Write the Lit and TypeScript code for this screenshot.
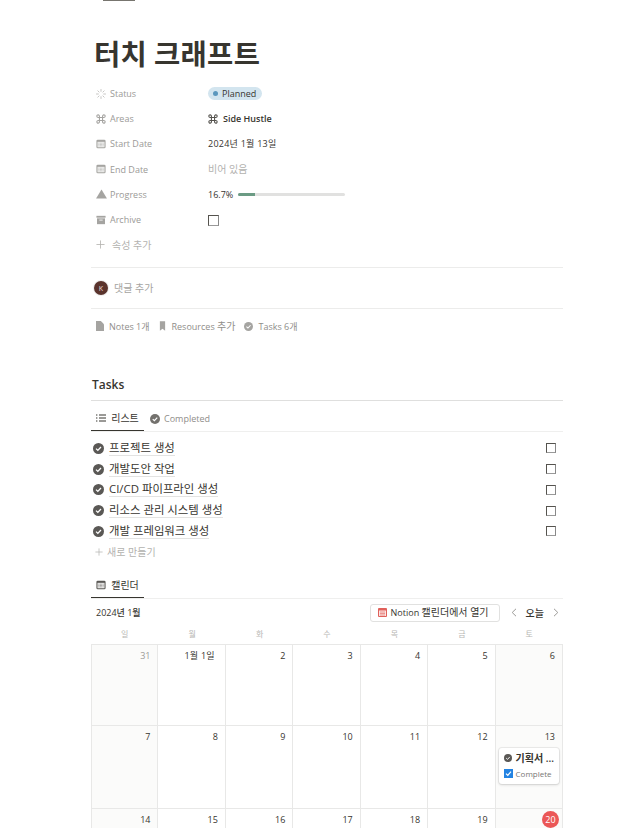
import { LitElement, html, css } from "lit";
import { customElement } from "lit/decorators.js";

const check = (s: number, c = "#5a5855") => html`<svg width=${s} height=${s} viewBox="0 0 16 16"><circle cx="8" cy="8" r="8" fill=${c}/><path d="M4.4 8.2l2.6 2.6 4.6-5" fill="none" stroke="#fff" stroke-width="1.9"/></svg>`;
const cal = (s: number, c = "#a5a4a1") => html`<svg width=${s} height=${s} viewBox="0 0 12 12"><rect x=".5" y=".8" width="11" height="10.4" rx="1.6" fill=${c}/><rect x="1.8" y="3.4" width="8.4" height="6.5" fill="#f1f1f0"/><path d="M3 5h6M3 6.6h6M3 8.2h6" stroke=${c} stroke-width=".8" stroke-dasharray="1 .7"/></svg>`;
const cmd = (s: number, c: string) => html`<svg width=${s} height=${s} viewBox="0 0 14 14" fill="none" stroke=${c} stroke-width="1.5"><path d="M4.8 4.8h4.4v4.4H4.8zM4.8 4.8H3.2a1.8 1.8 0 1 1 1.6-1.6zM9.2 4.8V3.2a1.8 1.8 0 1 1 1.6 1.6zM9.2 9.2h1.6a1.8 1.8 0 1 1-1.6 1.6zM4.8 9.2v1.6a1.8 1.8 0 1 1-1.6-1.6z"/></svg>`;
const spinner = html`<svg width="10" height="10" viewBox="0 0 12 12" stroke="#bcbbb8" stroke-width="1" stroke-linecap="round"><path d="M6 .6v2.2M6 9.2v2.2M.6 6h2.2M9.2 6h2.2M2.2 2.2l1.5 1.5M8.3 8.3l1.5 1.5M2.2 9.8l1.5-1.5M8.3 3.7l1.5-1.5"/></svg>`;
const plus = (s: number) => html`<svg width=${s} height=${s} viewBox="0 0 10 10" stroke="#b3b2af" stroke-width=".9"><path d="M5 .5v9M.5 5h9"/></svg>`;

const props = [
  ["Status", spinner],
  ["Areas", cmd(10, "#a5a4a1")],
  ["Start Date", cal(10)],
  ["End Date", cal(10)],
  ["Progress", html`<svg class="tri" width="11" height="10" viewBox="0 0 12 11"><path d="M6 .5L12 10.5H0z" fill="#a5a4a1"/></svg>`],
  ["Archive", html`<svg width="10" height="10" viewBox="0 0 12 12"><path d="M.5 1h11v2.2H.5z" fill="#a5a4a1"/><path d="M1.2 4h9.6v7H1.2z" fill="#a5a4a1"/><path d="M4 5.6h4v1H4z" fill="#fff"/></svg>`],
];
const tasks = ["프로젝트 생성", "개발도안 작업", "CI/CD 파이프라인 생성", "리소스 관리 시스템 생성", "개발 프레임워크 생성"];
const days = ["일", "월", "화", "수", "목", "금", "토"];
const weeks = [
  { h: 81, d: ["31", "1월 1일", "2", "3", "4", "5", "6"] },
  { h: 83, d: ["7", "8", "9", "10", "11", "12", "13"] },
  { h: 40, d: ["14", "15", "16", "17", "18", "19", "20"] },
];

@customElement("app-root")
export class AppRoot extends LitElement {
  static styles = css`
    :host { display: block; height: 828px; overflow: hidden; background: #fff; color: #37352f;
      font-family: "Open Sans", "Noto Sans CJK KR", sans-serif; font-size: 9px; }
    .ko { font-size: 10px; line-height: 1; }
    .page { padding: 0 72px 0 91px; display: flex; flex-direction: column; }
    .topicon { width: 32px; height: 1px; background: #77756f; margin-left: 12px; }
    h1 { margin: 34px 0 0 3px; font: 700 28.5px/36px "Noto Sans CJK KR", sans-serif; color: #37352f; letter-spacing: .35px; }
    .props { margin: 10px 0 0 3px; display: flex; flex-direction: column; }
    .prop { height: 25.2px; display: flex; align-items: center; }
    .pname { width: 114px; box-sizing: border-box; padding-left: 2px; display: flex; align-items: center; gap: 4px; color: #9b9a97; }
    .pname svg { flex: none; }
    .tri { margin-left: -.5px; margin-right: -.5px; }
    .pval { display: flex; align-items: center; }
    .pill { display: flex; align-items: center; gap: 4px; height: 13px; padding: 0 6px 0 5px; border-radius: 7px; background: #d3e5ef; color: #37352f; }
    .dot { width: 5px; height: 5px; border-radius: 50%; background: #5b97bd; }
    .area { display: flex; align-items: center; gap: 5px; font-weight: 600; }
    .date { letter-spacing: .25px; }
    .muted { color: #b3b2af; }
    .bar { width: 107px; height: 3px; border-radius: 2px; background: #e1e1e0; margin-left: 5px; overflow: hidden; }
    .fill { height: 100%; width: 17px; background: #6b9b84; }
    .box { width: 8px; height: 8px; border: 1px solid #55534e; background: #fff; box-sizing: content-box; border-bottom-color: #999; border-right-color: #888; }
    .pbox { width: 9px; height: 9px; margin-top: 1px; }
    .add { gap: 7px; color: #b3b2af; padding-left: 2px; }
    hr { width: 100%; border: 0; height: 1px; background: #ececeb; margin: 0; }
    .hr1 { margin-top: 9.8px; }
    .comment { height: 40px; display: flex; align-items: center; gap: 6px; padding-left: 3px; color: #a5a4a1; }
    .avatar { width: 14px; height: 14px; border-radius: 50%; background: #5a332c; color: #e8dfdc; font-size: 7px; display: flex; align-items: center; justify-content: center; box-shadow: 0 0 0 1px #eee; }
    .links { height: 34px; display: flex; align-items: center; gap: 9px; padding-left: 5px; color: #8f8e8a; }
    .link { display: flex; align-items: center; gap: 5px; }
    .link.res { gap: 6px; }
    h2 { margin: 33px 0 0 1px; font: 600 12px/17px "Open Sans", "Noto Sans CJK KR", sans-serif; color: #37352f; }
    .h2line { margin-top: 7px; background: #dfdfde; }
    .tabs { height: 30px; display: flex; align-items: center; gap: 6px; }
    .tab { width: 53px; height: 30px; box-sizing: border-box; padding-top: 5px; border-bottom: 1px solid #37352f; display: flex; align-items: center; justify-content: center; gap: 5px; color: #37352f; }
    .tab.gray { width: auto; border: 0; gap: 4px; color: #8f8e8a; font-weight: 500; }
    .thin { background: #efefee; }
    .rows { margin-top: 6px; display: flex; flex-direction: column; }
    .task { height: 20.7px; display: flex; align-items: center; gap: 5px; padding-left: 2px; }
    .tname { font-size: 11.4px; line-height: 14px; border-bottom: 1px solid #e3e3e2; }
    .task .box { margin-left: auto; margin-right: 7px; }
    .new { height: 20px; display: flex; align-items: center; gap: 4px; padding-left: 4px; color: #b3b2af; }
    .caltab { margin-top: 9px; height: 27px; }
    .caltab .tab { height: 27px; padding-top: 3px; }
    .calhead { height: 28px; display: flex; align-items: center; padding: 0 4px 0 5px; }
    .month { font-weight: 500; }
    .open { margin-left: auto; height: 18px; box-sizing: border-box; width: 130px; border: 1px solid #e1e1e0; border-radius: 3px; display: flex; align-items: center; gap: 4px; padding-left: 7px; color: #37352f; }
    .nav { display: flex; align-items: center; margin-left: 11px; gap: 9px; color: #37352f; }
    .nav .ko { font-weight: 500; }
    .grid { display: grid; grid-template-columns: repeat(7, 1fr); }
    .dow { text-align: center; color: #b8b7b4; height: 17px; line-height: 14px; font-size: 8px; }
    .wk { border-top: 1px solid #e8e8e7; box-sizing: border-box; }
    .cell { border-right: 1px solid #e8e8e7; text-align: right; padding: 4px 7px 0 0; box-sizing: border-box; position: relative; color: #37352f; }
    .cell:first-child { border-left: 1px solid #e8e8e7; }
    .cell.we { background: #fbfbfa; }
    .cell.out { color: #9b9a97; }
    .first { margin-right: 3px; letter-spacing: .25px; }
    .today { display: inline-flex; width: 17px; height: 17px; border-radius: 50%; background: #eb5757; color: #fff; align-items: center; justify-content: center; margin: -3px -4px 0 0; }
    .card { position: absolute; left: 3px; right: 3px; top: 22px; height: 36px; border-radius: 3px; background: #fff; box-shadow: 0 0 0 1px rgba(15,15,15,.06), 0 1px 3px rgba(15,15,15,.14); text-align: left; padding: 3px 5px; box-sizing: border-box; }
    .cline { display: flex; align-items: center; gap: 4px; height: 15px; font-weight: 600; }
    .cc { display: flex; align-items: center; gap: 3px; height: 15px; color: #787774; font-size: 8px; }
    .cb { width: 9px; height: 9px; background: #2383e2; display: flex; align-items: center; justify-content: center; }
  `;

  render() {
    return html`<div class="page">
      <div class="topicon"></div>
      <h1>터치 크래프트</h1>
      <div class="props">
        ${props.map(([n, i], idx) => html`<div class="prop"><div class="pname">${i}<span>${n}</span></div><div class="pval">${this.val(idx)}</div></div>`)}
        <div class="prop add">${plus(9)}<span class="ko">속성 추가</span></div>
      </div>
      <hr class="hr1" />
      <div class="comment"><div class="avatar">K</div><span class="ko">댓글 추가</span></div>
      <hr />
      <div class="links">
        <div class="link"><svg width="8" height="10" viewBox="0 0 9 11"><path d="M0 0h5.5L9 3.5V11H0z" fill="#a5a4a1"/></svg>Notes 1개</div>
        <div class="link res"><svg width="7" height="10" viewBox="0 0 8 11"><path d="M1 0h6v11L4 8.5 1 11z" fill="#a5a4a1"/></svg><span>Resources <span class="ko">추가</span></span></div>
        <div class="link">${check(9, "#a5a4a1")}Tasks 6개</div>
      </div>
      <h2>Tasks</h2>
      <hr class="h2line" />
      <div class="tabs">
        <div class="tab"><svg width="10" height="8" viewBox="0 0 10 8" stroke="#37352f"><path d="M3 1h7M3 4h7M3 7h7M0 1h1.4M0 4h1.4M0 7h1.4"/></svg><span class="ko">리스트</span></div>
        <div class="tab gray">${check(10, "#73716d")}Completed</div>
      </div>
      <hr class="thin" />
      <div class="rows">
        ${tasks.map((t) => html`<div class="task">${check(11)}<span class="tname">${t}</span><div class="box"></div></div>`)}
        <div class="new">${plus(8)}<span class="ko">새로 만들기</span></div>
      </div>
      <div class="tabs caltab"><div class="tab">${cal(10, "#5a5855")}<span class="ko">캘린더</span></div></div>
      <hr class="thin" />
      <div class="calhead">
        <span class="month">2024년 1월</span>
        <div class="open"><svg width="9" height="9" viewBox="0 0 9 9"><rect width="9" height="9" rx="1" fill="#e0605a"/><rect x="1" y="2.5" width="7" height="5.5" fill="#fbe4e2"/><path d="M2 4h5M2 5.5h5M2 7h5" stroke="#e0605a" stroke-width=".6"/></svg><span>Notion <span class="ko">캘린더에서 열기</span></span></div>
        <div class="nav">
          <svg width="6" height="9" viewBox="0 0 6 9" fill="none" stroke="#9b9a97"><path d="M5 .8L1.2 4.5 5 8.2"/></svg>
          <span class="ko">오늘</span>
          <svg width="6" height="9" viewBox="0 0 6 9" fill="none" stroke="#9b9a97"><path d="M1 .8l3.8 3.7L1 8.2"/></svg>
        </div>
      </div>
      <div class="grid">${days.map((d) => html`<div class="dow">${d}</div>`)}</div>
      ${weeks.map((w, wi) => html`<div class="grid wk" style="height:${w.h}px">
        ${w.d.map((d, i) => html`<div class="cell ${i === 0 || i === 6 ? "we" : ""} ${d === "31" ? "out" : ""}">
          ${d === "20" ? html`<span class="today">20</span>` : d === "1월 1일" ? html`<span class="first">${d}</span>` : d}
          ${wi === 1 && i === 6 ? html`<div class="card">
            <div class="cline">${check(8, "#5a5855")}<span class="ko">기획서 ...</span></div>
            <div class="cc"><div class="cb"><svg width="7" height="7" viewBox="0 0 7 7" fill="none" stroke="#fff" stroke-width="1.2"><path d="M1 3.6l1.8 1.8L6 1.6"/></svg></div>Complete</div>
          </div>` : ""}
        </div>`)}
      </div>`)}
    </div>`;
  }

  val(i: number) {
    switch (i) {
      case 0: return html`<div class="pill"><span class="dot"></span>Planned</div>`;
      case 1: return html`<div class="area">${cmd(10, "#55534e")}Side Hustle</div>`;
      case 2: return html`<span class="date">2024년 1월 13일</span>`;
      case 3: return html`<span class="muted ko">비어 있음</span>`;
      case 4: return html`<span>16.7%</span><div class="bar"><div class="fill"></div></div>`;
      default: return html`<div class="box pbox"></div>`;
    }
  }
}
